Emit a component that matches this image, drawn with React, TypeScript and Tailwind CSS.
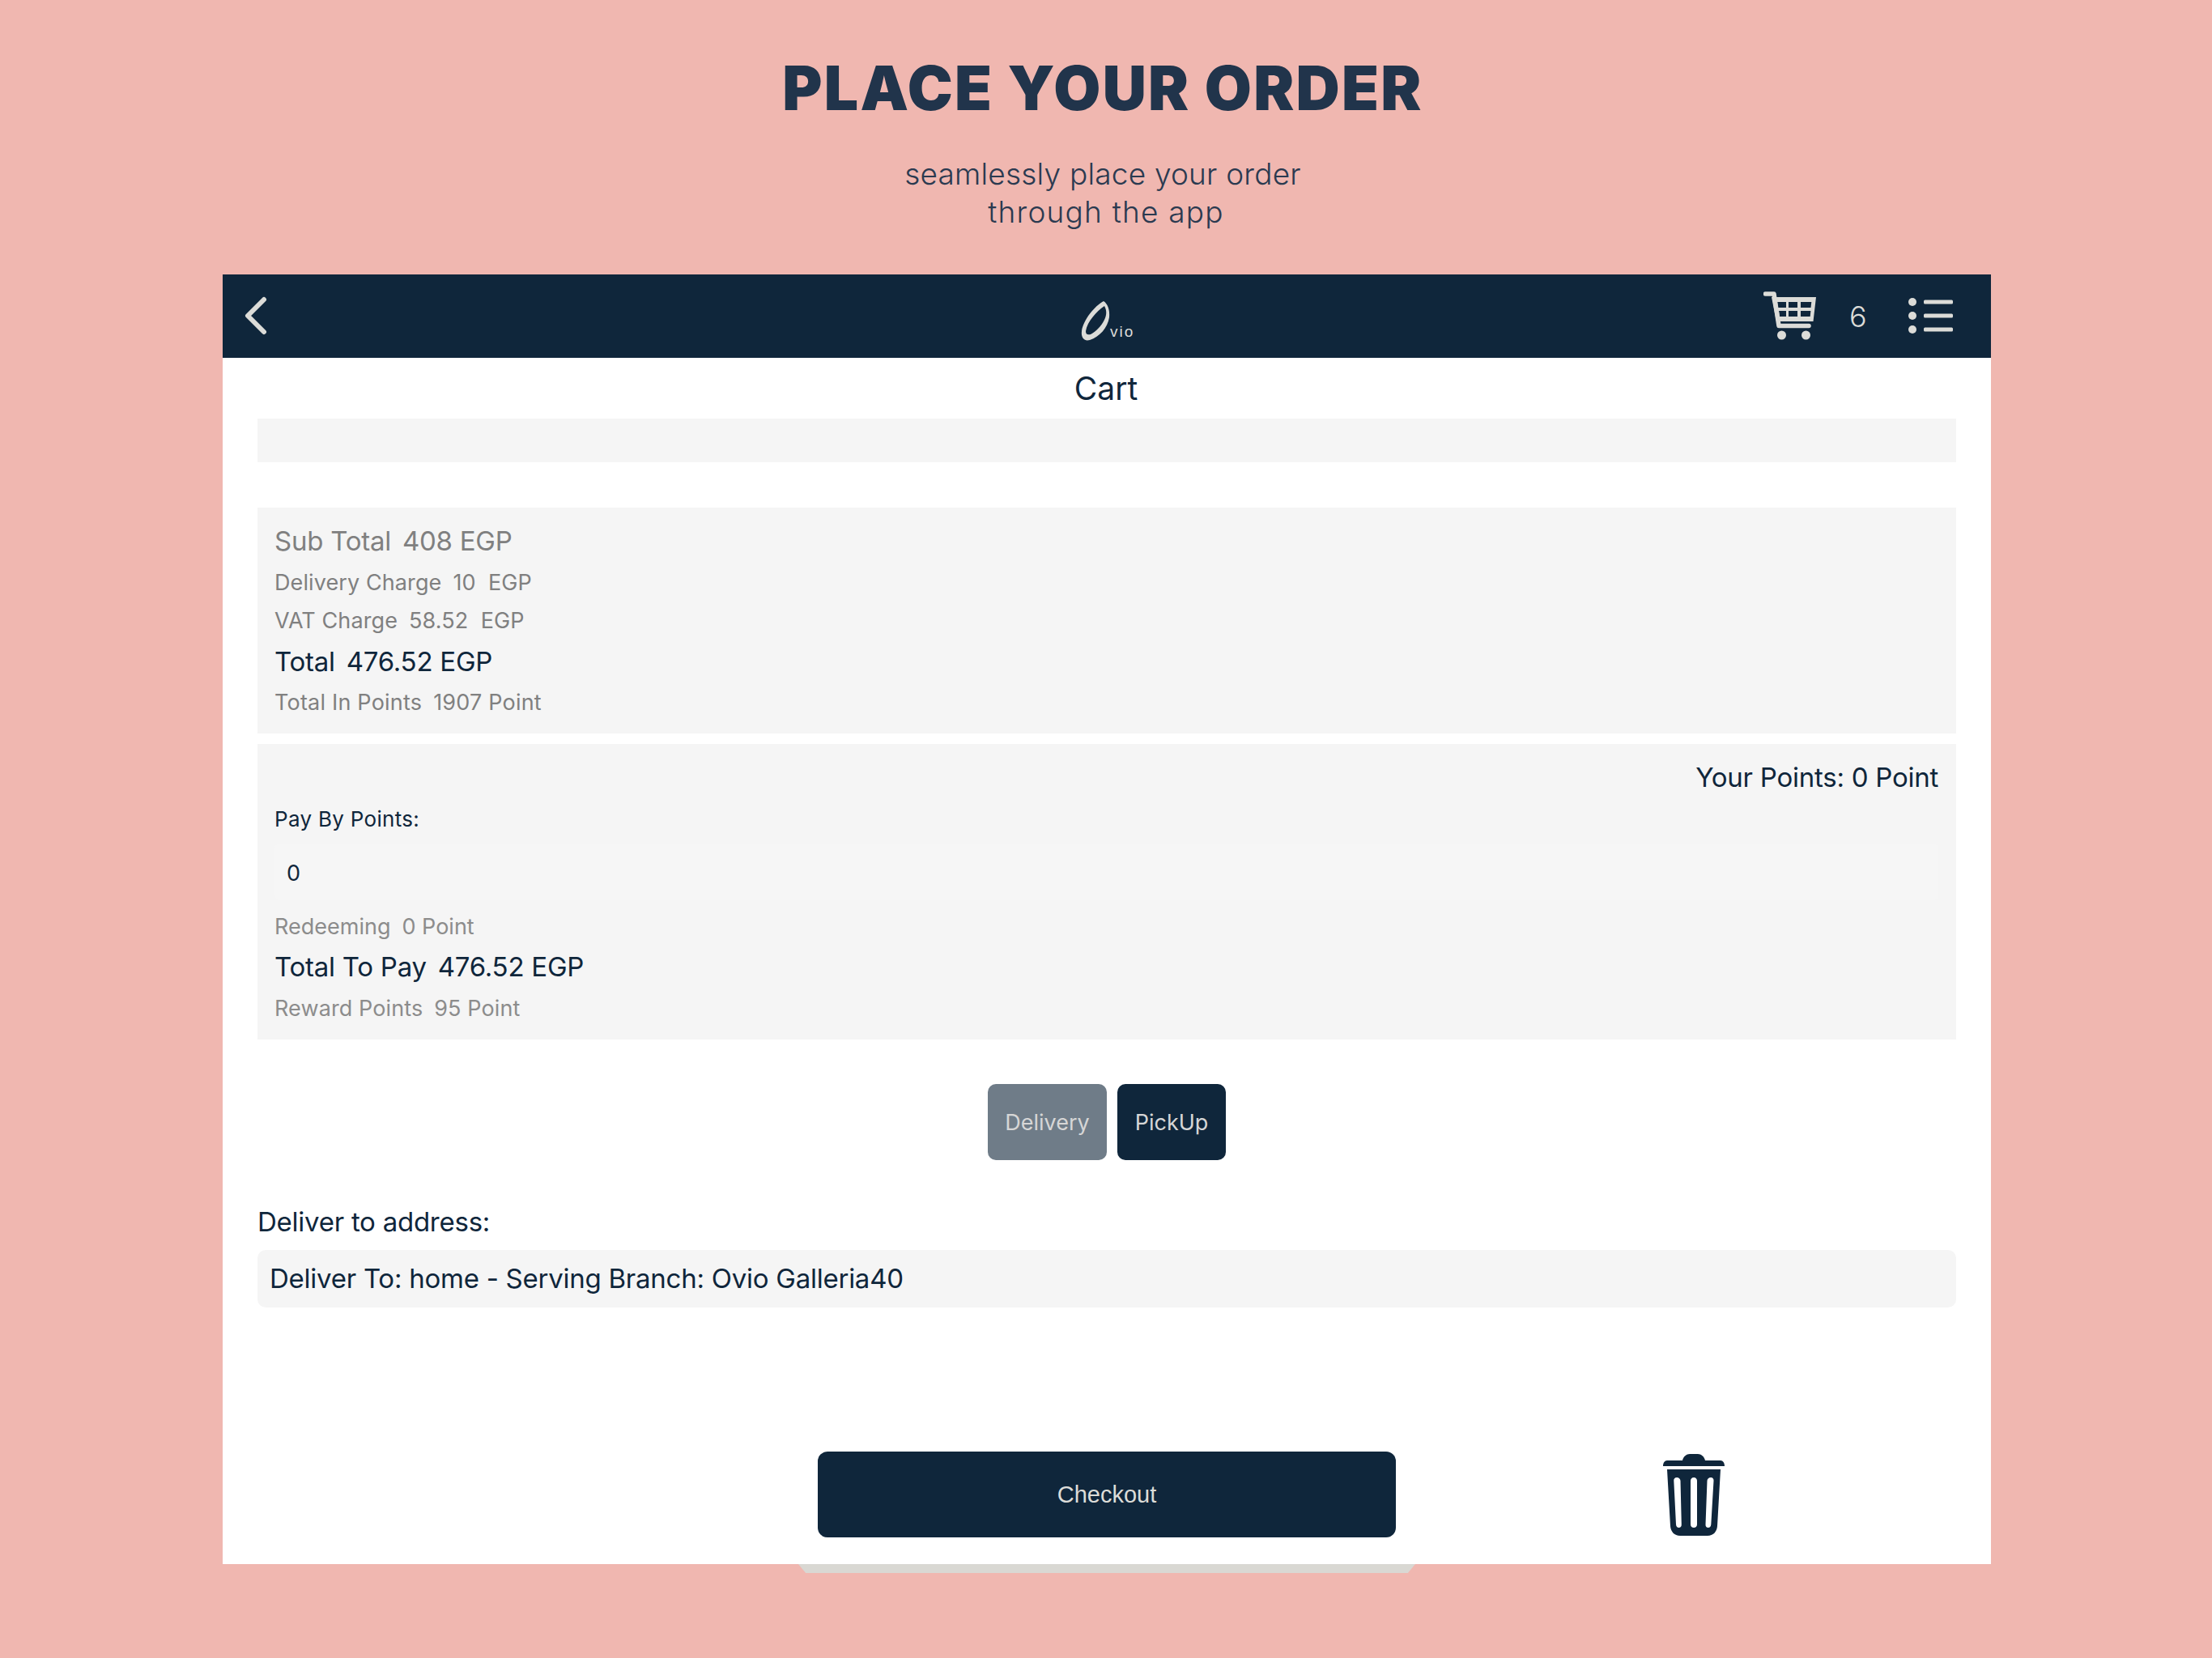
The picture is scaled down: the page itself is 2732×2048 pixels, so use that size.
import React from 'react';

const navy = 'text-[#0f263b]';

const CartIcon = () => (
  <svg width="66" height="61" viewBox="0 0 66 61" fill="none">
    <path d="M2.500 3h10.500L19 42.500h37" stroke="#dcdcd8" strokeWidth="5.500" strokeLinecap="round" strokeLinejoin="round" />
    <path
      fillRule="evenodd"
      clipRule="evenodd"
      d="M10 7h55l-3.500 30H16zM17 13l1 7h10v-7zM31 13v7h11v-7zM46 13v7h12.500l.8-7zM19 24l1 7h8v-7zM31 24v7h11v-7zM46 24v7h11.700l.7-7z"
      fill="#dcdcd8"
    />
    <circle cx="22.500" cy="54" r="5.500" fill="#dcdcd8" />
    <circle cx="52.500" cy="54" r="5.500" fill="#dcdcd8" />
  </svg>
);

const ListIcon = () => (
  <svg width="56" height="46" viewBox="0 0 56 46" fill="#dcdcd8">
    <circle cx="6" cy="6" r="5" />
    <circle cx="6" cy="23" r="5" />
    <circle cx="6" cy="40" r="5" />
    <rect x="20" y="3.500" width="36" height="5" rx="1.500" />
    <rect x="20" y="20.500" width="36" height="5" rx="1.500" />
    <rect x="20" y="37.500" width="36" height="5" rx="1.500" />
  </svg>
);

const TrashIcon = () => (
  <svg width="76" height="101" viewBox="0 0 76 101" fill="#0f263b">
    <path d="M5 8h19c1-5 5-8 9-8h10c4 0 8 3 9 8h19c3 0 5 3 5 7H0c0-4 2-7 5-7z" />
    <path
      fillRule="evenodd"
      clipRule="evenodd"
      d="M5 19h66l-4 70c-.5 7-5 12-12 12H21c-7 0-11.500-5-12-12zM17 29c-2.500 0-4 2-3.700 4l2.700 54c.2 2.500 1.500 4 3.500 4s3.500-1.500 3.300-4L21.500 33c-.1-2-2-4-4.500-4zM38 29c-2.500 0-4 2-4 4v54c0 2.500 1.700 4 4 4s4-1.500 4-4V33c0-2-1.500-4-4-4zM59 29c-2.500 0-4.400 2-4.500 4L52.500 87c-.2 2.500 1.300 4 3.300 4s3.300-1.500 3.500-4l3.200-54c.2-2-1-4-3.500-4z"
    />
  </svg>
);

const Logo = () => (
  <svg width="68" height="52" viewBox="0 0 68 52" fill="none">
    <path
      d="M28 1C17 7 3 24 1 38c-1 8 3 13 10 11 12-4 22-15 24-28C36 12 33 4 28 1zM29 7c3 5 3 11 0 17-4 8-10 14-17 18-4 1-6 0-6-4 2-12 13-24 23-31z"
      fill="#dcdcd8"
      fillRule="evenodd"
    />
    <text x="36" y="45" fontSize="19" fontFamily="Liberation Sans, sans-serif" fill="#dcdcd8" letterSpacing="2">
      vio
    </text>
  </svg>
);

const Row = ({ label, value, className }: { label: string; value: string; className: string }) => (
  <p className={`flex gap-[14px] whitespace-pre ${className}`}>
    <span>{label}</span>
    <span>{value}</span>
  </p>
);

export default function App() {
  return (
    <div className="h-[2048px] w-[2732px] overflow-hidden bg-[#f0b7b0] font-['Inter',sans-serif]">
      <div className="flex flex-col items-center pt-[67px]">
        <h1 className="pr-[8px] text-[75px] leading-[84px] font-black tracking-[2.3px] text-[#21344b]">PLACE YOUR ORDER</h1>
        <p className="mt-[40px] pr-[8px] text-[37px] leading-[47px] font-light tracking-[0.2px] text-[#2b3a50]">seamlessly place your order</p>
        <p className="text-[37px] leading-[47px] font-light tracking-[1.2px] text-[#2b3a50]">through the app</p>
      </div>

      <div className="relative mt-[54px] ml-[275px] w-[2184px]">
        <div className="relative z-10 h-[1593px] bg-white">
          <header className="flex h-[103px] items-center justify-between bg-[#0f263b] pr-[47px] pl-[26px]">
            <svg width="30" height="48" viewBox="0 0 30 48" fill="none" className="-mt-[2px]">
              <path d="M25 4 5 24l20 20" stroke="#dcdcd8" strokeWidth="6" strokeLinecap="round" strokeLinejoin="round" />
            </svg>
            <div className="absolute top-[32px] left-[1060px]">
              <Logo />
            </div>
            <div className="flex items-center">
              <CartIcon />
              <span className="ml-[40px] w-[22px] text-[36px] font-light text-[#dcdcd8]">6</span>
              <span className="ml-[50px] -mt-[2px]">
                <ListIcon />
              </span>
            </div>
          </header>

          <div className="px-[43px]">
            <h2 className={`h-[75px] pt-[14px] pr-[2px] text-center text-[39px] leading-[48px] ${navy}`}>Cart</h2>
            <div className="h-[54px] bg-[#f5f5f5]" />

            <section className="mt-[56px] h-[279px] bg-[#f5f5f5] pt-[15px] pl-[21px]">
              <Row label="Sub Total" value="408 EGP" className="text-[33px] leading-[52px] tracking-[-0.25px] text-[#808080]" />
              <Row label="Delivery Charge" value="10  EGP" className="text-[27px] leading-[52px] tracking-[0.1px] text-[#808080]" />
              <Row label="VAT Charge" value="58.52  EGP" className="text-[27px] leading-[42px] tracking-[0.1px] text-[#808080]" />
              <Row label="Total" value="476.52 EGP" className={`text-[33px] leading-[58px] tracking-[-0.25px] ${navy}`} />
              <Row label="Total In Points" value="1907 Point" className="text-[27px] leading-[44px] tracking-[0.2px] text-[#808080]" />
            </section>

            <section className="mt-[13px] h-[365px] bg-[#f5f5f5] pt-[18px] pr-[22px] pl-[21px]">
              <p className={`text-right text-[33px] leading-[46px] tracking-[-0.25px] ${navy}`}>Your Points: 0 Point</p>
              <p className={`mt-[6px] text-[26px] leading-[46px] tracking-[0.3px] ${navy}`}>Pay By Points:</p>
              <div className={`mt-[7px] flex h-[70px] items-center rounded-[6px] bg-[#f6f6f6] pt-[5px] pl-[15px] text-[27px] ${navy}`}>0</div>
              <Row label="Redeeming" value="0 Point" className="mt-[11px] text-[27px] leading-[44px] text-[#8c8c8c]" />
              <Row label="Total To Pay" value="476.52 EGP" className={`text-[33px] leading-[55px] tracking-[-0.25px] ${navy}`} />
              <Row label="Reward Points" value="95 Point" className="text-[27px] leading-[48px] tracking-[0.1px] text-[#8c8c8c]" />
            </section>

            <div className="mt-[55px] flex justify-center gap-[13px] text-[27px]">
              <button className="flex h-[94px] w-[147px] items-center justify-center rounded-[10px] bg-[#6f7c88] pt-[2px] text-[#d6d6d6]">Delivery</button>
              <button className="flex h-[94px] w-[134px] items-center justify-center rounded-[10px] bg-[#0f263b] pt-[2px] text-[#d6d6d6]">PickUp</button>
            </div>

            <p className={`mt-[56px] text-[33px] leading-[40px] tracking-[-0.25px] ${navy}`}>Deliver to address:</p>
            <div className={`mt-[15px] flex h-[71px] items-center rounded-[10px] bg-[#f5f5f5] pl-[15px] text-[33px] tracking-[-0.25px] ${navy}`}>
              Deliver To: home - Serving Branch: Ovio Galleria40
            </div>

            <div className="relative mt-[178px] flex justify-center">
              <button className="flex h-[106px] w-[714px] items-center justify-center rounded-[12px] bg-[#0f263b] pt-[2px] font-['Liberation_Sans',sans-serif] text-[29px] text-[#dcdcd8]">
                Checkout
              </button>
              <div className="absolute top-[3px] left-[1736px]">
                <TrashIcon />
              </div>
            </div>
          </div>
        </div>
        <div className="mx-auto h-[11px] w-[762px] bg-[#d9d8d3] [clip-path:polygon(0_0,100%_0,98.800%_100%,1.200%_100%)]" />
      </div>
    </div>
  );
}
